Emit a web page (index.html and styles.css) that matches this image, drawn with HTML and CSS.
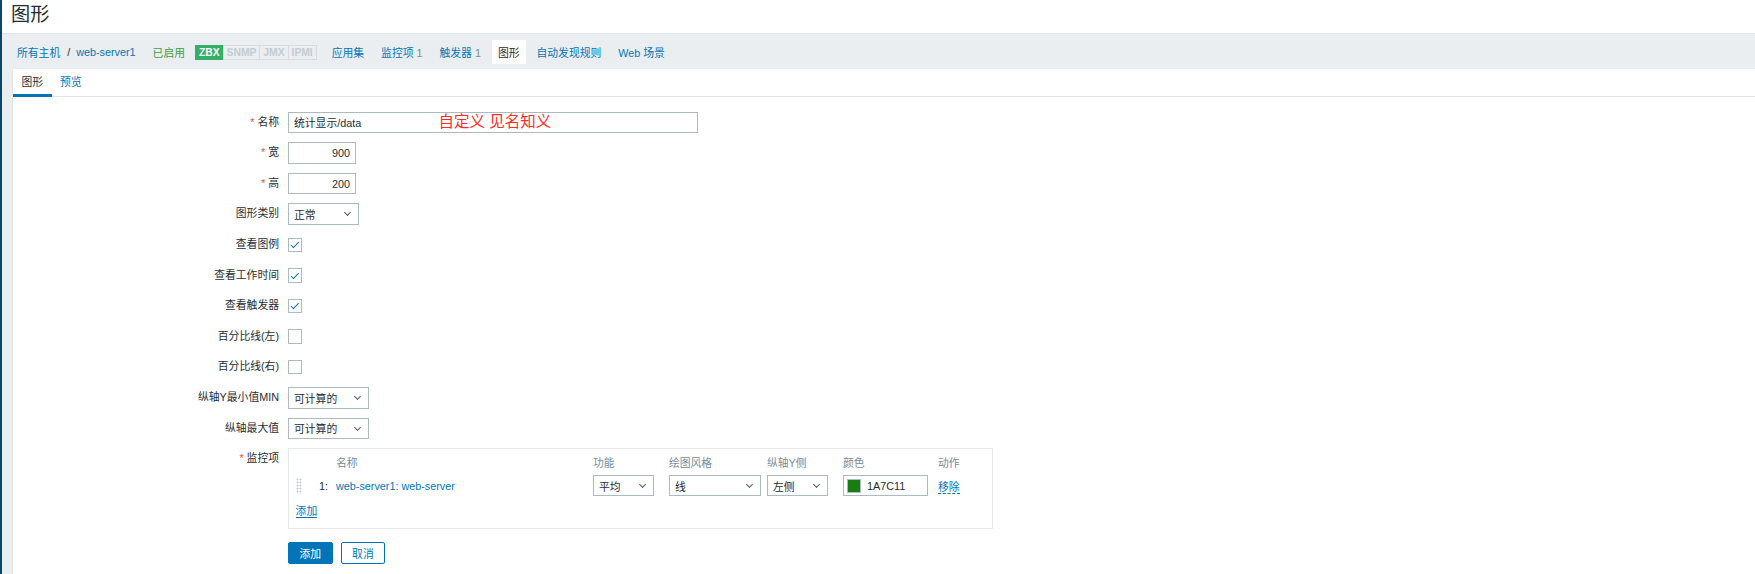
FILE: index.html
```html
<!DOCTYPE html>
<html lang="zh">
<head>
<meta charset="utf-8">
<title>图形</title>
<link rel="stylesheet" href="styles.css">
</head>
<body>
<div class="layout">
  <div class="sidebar"></div>
  <div class="main">
    <header class="page-header"><h1>图形</h1></header>
    <nav class="host-nav">
      <a class="link" href="#">所有主机</a>
      <span class="sep">/</span>
      <a class="link" href="#">web-server1</a>
      <span class="status-on">已启用</span>
      <span class="avail">
        <span class="badge badge-on">ZBX</span><span class="badge">SNMP</span><span class="badge">JMX</span><span class="badge">IPMI</span>
      </span>
      <a class="link nav-item" href="#">应用集</a>
      <a class="link nav-item" href="#">监控项 <span class="count">1</span></a>
      <a class="link nav-item" href="#">触发器 <span class="count">1</span></a>
      <span class="nav-item nav-current">图形</span>
      <a class="link nav-item" href="#">自动发现规则</a>
      <a class="link nav-item" href="#">Web 场景</a>
    </nav>
    <div class="content-wrap">
      <div class="content">
        <div class="tabs">
          <span class="tab tab-active">图形</span>
          <span class="tab link">预览</span>
        </div>
        <div class="form">
          <div class="row">
            <label class="lbl"><span class="req">*</span> 名称</label>
            <div class="ctl name-ctl">
              <input class="input input-name" value="统计显示/data">
              <span class="note">自定义 见名知义</span>
            </div>
          </div>
          <div class="row">
            <label class="lbl"><span class="req">*</span> 宽</label>
            <div class="ctl"><input class="input input-num" value="900"></div>
          </div>
          <div class="row">
            <label class="lbl"><span class="req">*</span> 高</label>
            <div class="ctl"><input class="input input-num" value="200"></div>
          </div>
          <div class="row">
            <label class="lbl">图形类别</label>
            <div class="ctl"><span class="select sel-type">正常<i class="chev"></i></span></div>
          </div>
          <div class="row">
            <label class="lbl">查看图例</label>
            <div class="ctl"><span class="cb checked"></span></div>
          </div>
          <div class="row">
            <label class="lbl">查看工作时间</label>
            <div class="ctl"><span class="cb checked"></span></div>
          </div>
          <div class="row">
            <label class="lbl">查看触发器</label>
            <div class="ctl"><span class="cb checked"></span></div>
          </div>
          <div class="row">
            <label class="lbl">百分比线(左)</label>
            <div class="ctl"><span class="cb"></span></div>
          </div>
          <div class="row">
            <label class="lbl">百分比线(右)</label>
            <div class="ctl"><span class="cb"></span></div>
          </div>
          <div class="row">
            <label class="lbl">纵轴Y最小值MIN</label>
            <div class="ctl"><span class="select sel-calc">可计算的<i class="chev"></i></span></div>
          </div>
          <div class="row">
            <label class="lbl">纵轴最大值</label>
            <div class="ctl"><span class="select sel-calc">可计算的<i class="chev"></i></span></div>
          </div>
          <div class="row row-items">
            <label class="lbl"><span class="req">*</span> 监控项</label>
            <div class="ctl">
              <div class="items-box">
                <div class="items-head">
                  <span class="c-drag"></span><span class="c-num"></span>
                  <span class="c-name">名称</span>
                  <span class="c-func">功能</span>
                  <span class="c-style">绘图风格</span>
                  <span class="c-axis">纵轴Y侧</span>
                  <span class="c-color">颜色</span>
                  <span class="c-act">动作</span>
                </div>
                <div class="items-row">
                  <span class="c-drag"><i class="drag"></i></span>
                  <span class="c-num">1:</span>
                  <span class="c-name"><a class="link" href="#">web-server1: web-server</a></span>
                  <span class="c-func"><span class="select sel-func">平均<i class="chev"></i></span></span>
                  <span class="c-style"><span class="select sel-style">线<i class="chev"></i></span></span>
                  <span class="c-axis"><span class="select sel-axis">左侧<i class="chev"></i></span></span>
                  <span class="c-color"><span class="color-input"><i class="swatch"></i>1A7C11</span></span>
                  <span class="c-act"><a class="link dashed" href="#">移除</a></span>
                </div>
                <a class="link add-link" href="#">添加</a>
              </div>
            </div>
          </div>
          <div class="row row-buttons">
            <span class="lbl"></span>
            <div class="ctl buttons">
              <button class="btn btn-primary">添加</button>
              <button class="btn btn-alt">取消</button>
            </div>
          </div>
        </div>
      </div>
    </div>
  </div>
</div>
</body>
</html>
```
FILE: styles.css
```css
* { box-sizing: border-box; }
html, body { margin: 0; padding: 0; height: 100%; }
body {
  font-family: "Liberation Sans", Arial, "Noto Sans CJK SC", sans-serif;
  font-size: 10.8px;
  color: #1f2c33;
  background: #ffffff;
}
.layout { display: flex; height: 574px; overflow: hidden; }
.sidebar { width: 2px; background: #0a466a; flex: none; }
.main { flex: 1; display: flex; flex-direction: column; min-width: 0; }
.link { color: #0275b8; text-decoration: none; }

.page-header { height: 33px; padding: 0 0 0 9px; background: #fff; flex: none; }
.page-header h1 {
  margin: 0; font-weight: normal; font-size: 19.2px; line-height: 29px;
}

.host-nav {
  height: 36px; flex: none;
  background: #ebeef0;
  border-top: 1px solid #dfe4e7;
  display: flex; align-items: center;
  padding: 1px 0 0 15px;
  white-space: nowrap;
}
.sep { margin: 0 6px 0 7px; color: #1f2c33; }
.status-on { color: #429e47; margin-left: 17px; }
.avail { display: inline-flex; margin-left: 10px; margin-right: 4px; }
.badge {
  font-weight: bold; font-size: 10.3px; line-height: 13px;
  padding: 0 3px; color: #c2ccd1; border: 1px solid #d5dce0;
  background: #ebeef0; margin-left: -1px;
}
.badge-on { background: #34af67; color: #fff; border-color: #34af67; margin-left: 0; }
.nav-item { margin-left: 5px; padding: 4px 6px; }
.count { color: #768d99; }
.nav-current { background: #fff; color: #1f2c33; }

.content-wrap { flex: 1; background: #ebeef0; padding: 0 0 0 10px; }
.content {
  background: #fff; height: 100%;
  border-left: 1px solid #dfe4e7;
}
.tabs {
  display: flex; height: 28px; border-bottom: 1px solid #dfe4e7;
}
.tab { padding: 0 8.5px; line-height: 27px; height: 28px; }
.tab-active { border-bottom: 3px solid #0275b8; color: #1f2c33; line-height: 27px; }

.form { padding-top: 14.6px; display: flex; flex-direction: column; gap: 9px; }
.row { display: flex; align-items: flex-start; }
.lbl {
  width: 266px; text-align: right; line-height: 21.6px;
  flex: none; color: #1f2c33; margin-right: 9px;
}
.req { color: #d64e4e; }
.ctl { display: flex; align-items: center; min-height: 21.6px; }
.name-ctl { position: relative; }
.input {
  height: 21.6px; border: 1px solid #acbbc2; font: inherit; color: #1f2c33;
  padding: 0 5px; background: #fff; outline: none;
}
.input-name { width: 410px; }
.input-num { width: 68px; text-align: right; }
.note {
  position: absolute; left: 150.5px; top: 0.5px;
  color: #ff2a2a; font-size: 15.5px; line-height: 20px;
}
.select {
  height: 21.6px; border: 1px solid #acbbc2; display: inline-flex; align-items: center;
  padding: 0 5px; position: relative; background: #fff;
}
.chev {
  position: absolute; right: 8px; top: 6px; width: 5px; height: 5px;
  border-right: 1px solid #4f5f66; border-bottom: 1px solid #4f5f66;
  transform: rotate(45deg);
}
.sel-type { width: 71px; }
.sel-calc { width: 81px; }
.sel-func { width: 61px; }
.sel-style { width: 92px; }
.sel-axis { width: 61px; }
.cb {
  width: 14.4px; height: 14.4px; border: 1px solid #acbbc2; display: inline-block;
  position: relative; background: #fff;
}
.cb.checked::after {
  content: ""; position: absolute; left: 4.2px; top: 1.5px; width: 3px; height: 6.5px;
  border-right: 1px solid #0275b8; border-bottom: 1px solid #0275b8;
  transform: rotate(45deg);
}

.items-box {
  width: 705px; border: 1px solid #e4e8eb; padding: 3px 6.6px 10px 6.6px;
}
.items-head, .items-row { display: flex; align-items: center; }
.items-head { color: #768d99; height: 19px; }
.items-row { height: 25px; margin-top: 2px; }
.c-drag { width: 23.4px; flex: none; }
.c-num { width: 17px; flex: none; }
.c-name { width: 257px; flex: none; }
.c-func { width: 76px; flex: none; }
.c-style { width: 98px; flex: none; }
.c-axis { width: 76px; flex: none; }
.c-color { width: 95px; flex: none; }
.c-act { flex: none; }
.drag {
  display: block; width: 6px; height: 16px;
  background-image: radial-gradient(circle, #bfc9ce 0.9px, transparent 1.1px);
  background-size: 3px 3px;
}
.color-input {
  width: 85px; height: 21.6px; border: 1px solid #acbbc2; display: inline-flex;
  align-items: center; padding-left: 3px; gap: 6px; background: #fff;
}
.swatch { width: 14px; height: 14px; background: #1a7c11; display: inline-block; border: 1px solid #acbbc2; }
.dashed { border-bottom: 1px dashed #0275b8; }
.add-link {
  display: inline-block; margin-top: 7px; border-bottom: 1px solid #0275b8; line-height: 12px;
}

.row-buttons { margin-top: 4px; }
.buttons { gap: 8px; }
.btn {
  height: 21.6px; font: inherit; padding: 0 10.5px; cursor: pointer; border-radius: 2px;
}
.btn-primary { background: #0275b8; color: #fff; border: 1px solid #0275b8; }
.btn-alt { background: #fff; color: #0275b8; border: 1px solid #0275b8; }
```
